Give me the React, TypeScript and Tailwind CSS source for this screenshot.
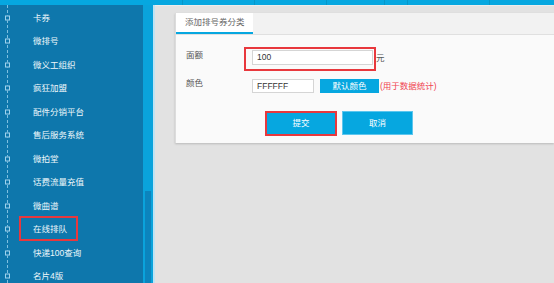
import React from "react";

const items = [
  "卡券",
  "微排号",
  "微义工组织",
  "疯狂加盟",
  "配件分销平台",
  "售后服务系统",
  "微拍堂",
  "话费流量充值",
  "微曲谱",
  "在线排队",
  "快递100查询",
  "名片4版",
];

const font = { fontFamily: '"Liberation Sans", "Noto Sans CJK SC", sans-serif' };

export default function App() {
  return (
    <div className="w-[554px] h-[283px] overflow-hidden flex flex-col bg-[#e2e2e2]" style={font}>
      {/* top bar */}
      <div className="h-[5px] shrink-0 flex bg-[#06a7e0]">
        <div className="w-[183px] border-r border-[#0596c9]" />
        <div className="w-[72px] border-r border-[#0596c9]" />
        <div className="w-[72px] border-r border-[#0596c9]" />
        <div className="w-[58px] border-r border-[#0596c9]" />
        <div className="w-[23px] border-r border-[#0596c9]" />
        <div className="w-[82px] border-r border-[#0596c9]" />
        <div className="flex-1" />
      </div>
      <div className="flex flex-1 min-h-0">
        {/* sidebar */}
        <div className="w-[143px] shrink-0 bg-[#0e77ac] relative pt-[1px]">
          <div className="absolute left-[7px] top-0 bottom-0 border-l border-dashed border-[#7fc0e0]" />
          {items.map((t, i) => (
            <div key={t} className="relative h-[23.5px] flex items-center">
              <div className="absolute left-[5px] top-1/2 -translate-y-1/2 w-[5px] h-[5px] border border-[#9fd2ec] bg-[#0e77ac]" />
              {i === 9 && (
                <div className="absolute left-[19px] top-[-2px] w-[59px] h-[25px] border-2 border-[#e8383d]" />
              )}
              <span className="pl-[33px] text-[8.5px] leading-none text-[#eef7fb]">{t}</span>
            </div>
          ))}
        </div>
        {/* scrollbar */}
        <div className="w-[10px] shrink-0 bg-[#0aa3dc] flex flex-col pl-[2px] pr-[2px] pt-[186px]">
          <div className="flex-1 bg-[#0c84bd]" />
        </div>
        <div className="w-[2px] shrink-0 bg-[#bfe3f3]" />
        {/* main */}
        <div className="flex-1 border-t border-[#ececec] pt-[7px] pl-[20px]">
          <div className="bg-[#fafafa] shadow-[0_1px_2px_rgba(0,0,0,0.18)] border-l border-[#dcdcdc]">
            <div className="h-[22px] bg-[#f2f2f2] border-b border-[#e0e0e0] flex">
              <div className="w-[77px] h-[21px] bg-white border-b-2 border-[#06a7e0] flex items-center pl-[9px] text-[8.5px] text-[#666]">
                添加排号券分类
              </div>
            </div>
            <div className="pt-[12px] pb-[7px]">
              <div className="flex items-start">
                <div className="w-[68px] pl-[10px] pt-[2px] text-[8.5px] text-[#555]">面额</div>
                <div className="w-[132px] h-[24px] border-2 border-[#e8383d] pl-[6px] pr-[1px] pt-[1px]">
                  <div className="h-[15px] bg-white border border-[#d5d5d5] flex items-center pl-[4px] text-[8.5px] text-[#333]">
                    100
                  </div>
                </div>
                <div className="pt-[5px] text-[8.5px] text-[#555]">元</div>
              </div>
              <div className="flex items-start mt-[8px]">
                <div className="w-[76px] pl-[10px] text-[8.5px] text-[#555] -mt-[2px]">颜色</div>
                <div className="w-[62px] h-[14px] bg-white border border-[#d5d5d5] flex items-center pl-[4px] text-[8.5px] text-[#333]">
                  FFFFFF
                </div>
                <div className="ml-[6px] w-[59px] h-[14px] bg-[#06a7e0] flex items-center justify-center text-[8.5px] text-white">
                  默认颜色
                </div>
                <div className="ml-[1px] h-[14px] flex items-center text-[8.5px] text-[#f0434f]">(用于数据统计)</div>
              </div>
              <div className="flex mt-[18px] pl-[89px] gap-[5px]">
                <div className="w-[72px] h-[25px] border-2 border-[#e8383d] bg-[#06a7e0] flex items-center justify-center text-[8.5px] text-white">
                  提交
                </div>
                <div className="w-[71px] h-[24px] border border-[#5cc6ee] bg-[#06a7e0] flex items-center justify-center text-[8.5px] text-white">
                  取消
                </div>
              </div>
            </div>
          </div>
        </div>
      </div>
    </div>
  );
}
